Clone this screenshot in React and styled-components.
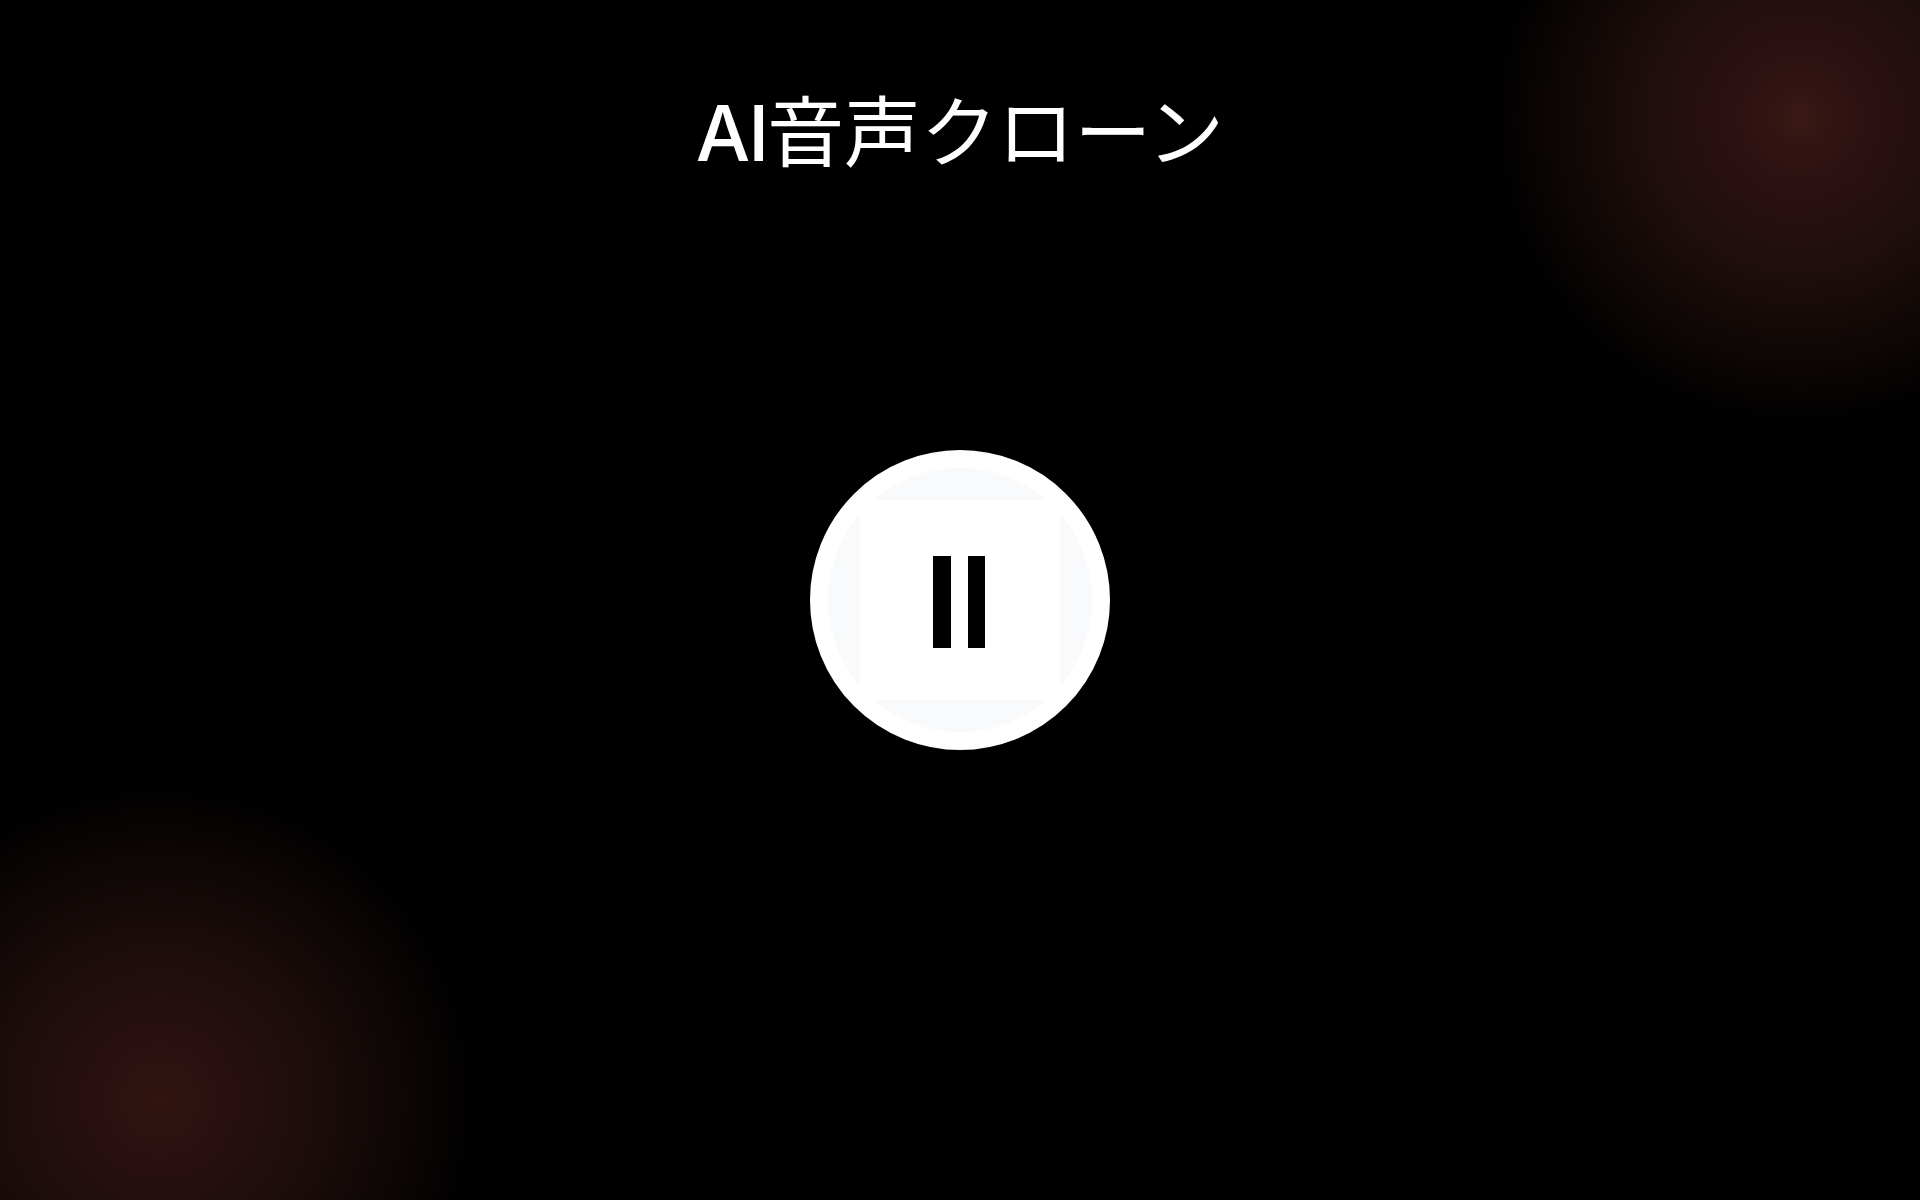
import React from "react";
import styled, { createGlobalStyle } from "styled-components";

const GlobalStyle = createGlobalStyle`
html, body {
  margin: 0;
  padding: 0;
  background: #000;
}
`

function App() {
  return (
    <Page>
      <GlobalStyle />
      <Glow $size={620} $top={-192} $left={1490} $core="#3a1a16" $fade={1} />
      <Glow $size={640} $top={780} $left={-160} $core="#36160f" $fade={0.9} />
      <Title><LatinPart>AI</LatinPart>音声クローン</Title>
      <Stage>
        <RecordButton type="button" aria-label="pause">
          <InnerSquare>
            <PauseBar />
            <PauseBar />
          </InnerSquare>
        </RecordButton>
      </Stage>
    </Page>
  );
}

const Page = styled.div`
position: relative;
width: 100%;
height: 1200px;
overflow: hidden;
background: #000;
display: flex;
flex-direction: column;
align-items: center;
font-family: "Inter", "Noto Sans CJK JP", sans-serif;
`
const Glow = styled.div`
position: absolute;
top: ${(p) => p.$top}px;
left: ${(p) => p.$left}px;
width: ${(p) => p.$size}px;
height: ${(p) => p.$size}px;
opacity: ${(p) => p.$fade};
background: radial-gradient(circle closest-side, ${(p) => p.$core} 0%, #331513 8%, #2c1012 24%, #1f0e0c 49%, #100806 73%, #000 100%);
`
const Title = styled.h1`
position: relative;
margin: 94px 0 0;
font-size: 76.8px;
line-height: 80px;
font-weight: 400;
color: #fff;
`
const LatinPart = styled.span`
font-weight: 500;
letter-spacing: -2px;
`
const Stage = styled.div`
position: relative;
margin-top: 276px;
`
const RecordButton = styled.button`
width: 300px;
height: 300px;
padding: 0;
box-sizing: border-box;
border: 18px solid #fff;
border-radius: 50%;
background: #f9fafb;
display: flex;
align-items: center;
justify-content: center;
overflow: hidden;
`
const InnerSquare = styled.div`
flex: none;
width: 200px;
height: 200px;
background: #fff;
display: flex;
align-items: center;
justify-content: center;
gap: 17px;
padding: 3px 2px 0 0;
box-sizing: border-box;
`
const PauseBar = styled.span`
width: 17.5px;
height: 92px;
background: #000;
`

export default App
